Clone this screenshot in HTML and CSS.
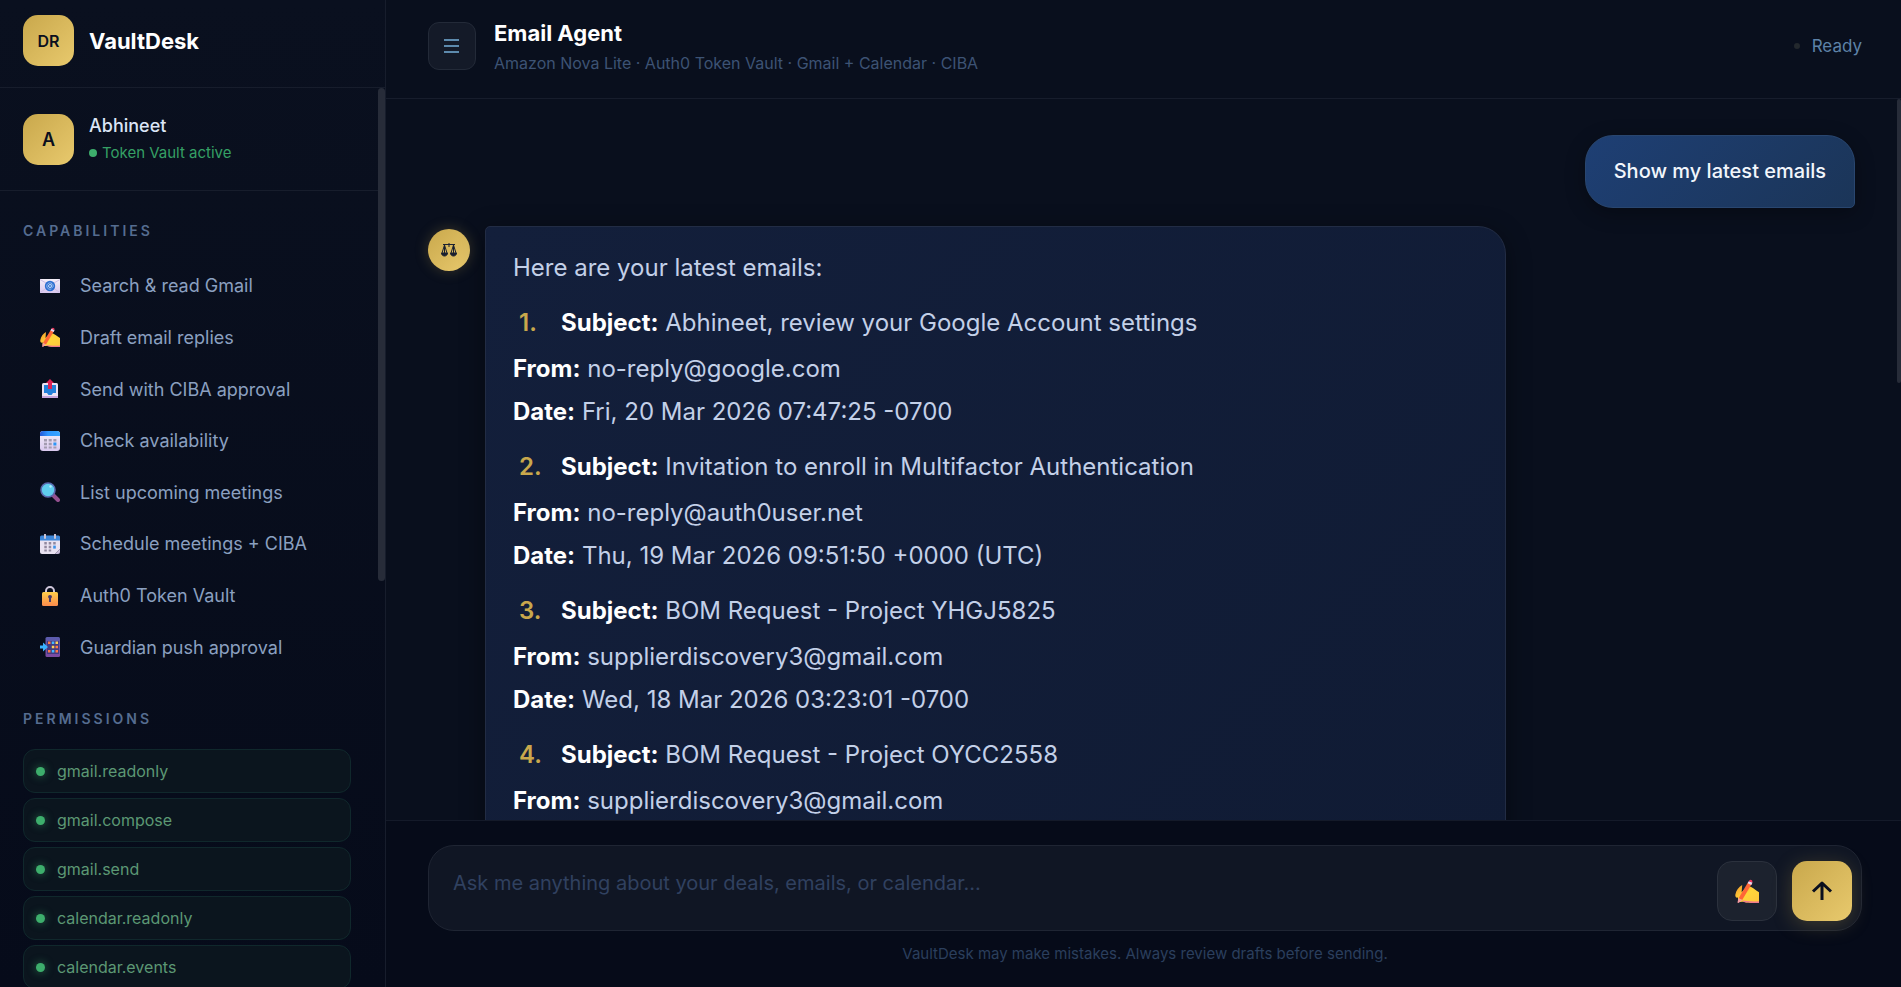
FILE: index.html
```html
<!DOCTYPE html>
<html lang="en">
<head>
    <meta charset="UTF-8">
    <meta name="viewport" content="width=device-width, initial-scale=1.0">
    <title>VaultDesk</title>
    <link rel="stylesheet" href="styles.css">
</head>
<body>
    <svg class="defs" aria-hidden="true">
        <defs>
            <linearGradient id="paper" x1="0" y1="0" x2="0" y2="1">
                <stop offset="0" stop-color="#f4eff8"/>
                <stop offset="1" stop-color="#d9c8ee"/>
            </linearGradient>
            <linearGradient id="blue" x1="0" y1="0" x2="1" y2="0">
                <stop offset="0" stop-color="#2257d8"/>
                <stop offset="0.4" stop-color="#2e96ff"/>
                <stop offset="1" stop-color="#38a4ff"/>
            </linearGradient>
            <linearGradient id="hand" x1="0" y1="0" x2="1" y2="1">
                <stop offset="0" stop-color="#f59a2b"/>
                <stop offset="0.5" stop-color="#ffd53a"/>
                <stop offset="1" stop-color="#ffc73c"/>
            </linearGradient>
            <linearGradient id="lock" x1="0" y1="0" x2="0" y2="1">
                <stop offset="0" stop-color="#ffcf4a"/>
                <stop offset="1" stop-color="#fb8a4c"/>
            </linearGradient>
            <linearGradient id="phone" x1="0" y1="0" x2="0" y2="1">
                <stop offset="0" stop-color="#5a5cae"/>
                <stop offset="1" stop-color="#7c4aa0"/>
            </linearGradient>
            <symbol id="writing" viewBox="0 0 20 20">
                <path d="M6 5 C3 6.500 1 9.500 0.300 13 C0 15 1 16 2.500 15.500 L2.500 18 C4 20 6 18.500 7.500 19 C10 20 14 20 20 20 L20 11 C17 9 14 6.500 11.500 6 C9 7.500 7.500 9 5.500 11 Z" fill="url(#hand)"/>
                <path d="M7 19 C10 20 14 20 20 20 L20 18.500 C15 19 10 18.500 6 18 Z" fill="#f07a8c"/>
                <path d="M11 2.500 L14 4 L6 17.500 L3 16 Z" fill="#ff6636"/>
                <path d="M11.600 1.600 L14.600 3 L13.600 5 L10.500 3.500 Z" fill="#e8d6f0"/>
                <path d="M11.800 1.400 C12.300 0 14.800 0.800 14.500 2.500 L14.200 3 L11.500 1.800 Z" fill="#f2355b"/>
                <path d="M3 16 L6 17.500 L3 20 L2 19.500 Z" fill="#f59aa0"/>
            </symbol>
        </defs>
    </svg>
    <div class="app">
        <aside class="sidebar">
            <div class="brand">
                <div class="badge badge-brand">DR</div>
                <div class="brand-name">VaultDesk</div>
            </div>
            <div class="sidebar-body">
                <div class="user">
                    <div class="badge">A</div>
                    <div>
                        <div class="user-name">Abhineet</div>
                        <div class="user-status"><span class="status-dot"></span>Token Vault active</div>
                    </div>
                </div>
                <h2 class="section-title">CAPABILITIES</h2>
                <ul class="capabilities">
                    <li>
                        <svg class="icon" viewBox="0 0 20 20">
                            <rect x="0" y="3" width="20" height="14" fill="url(#paper)"/>
                            <path d="M0 16.500 L7 12 M20 16.500 L13 12 M0 3.500 L6 7 M20 3.500 L14 7" stroke="#cdbde6" fill="none"/>
                            <circle cx="10" cy="10" r="5.200" fill="#2d6fd0"/>
                            <circle cx="10" cy="10" r="1.500" stroke="#c5dcf8" fill="none"/>
                            <path d="M11.500 8.500 V10.800 C11.700 12 13.200 11.500 13.200 10 A3.200 3.200 0 1 0 11.500 12.900" stroke="#a9c9f2" stroke-width="0.800" fill="none"/>
                        </svg>
                        Search &amp; read Gmail
                    </li>
                    <li>
                        <svg class="icon"><use href="#writing"/></svg>
                        Draft email replies
                    </li>
                    <li>
                        <svg class="icon" viewBox="0 0 20 20">
                            <rect x="2" y="4" width="16" height="15" rx="1.500" fill="#ebe3f4"/>
                            <rect x="2" y="17" width="16" height="2" fill="#c4a5dd"/>
                            <path d="M4 6 H16 V14 H13 L11.500 16 H8.500 L7 14 H4 Z" fill="#2380d8"/>
                            <path d="M10 0 L14 4 H12 V10 H8 V4 H6 Z" fill="#dc2355"/>
                        </svg>
                        Send with CIBA approval
                    </li>
                    <li>
                        <svg class="icon" viewBox="0 0 20 20">
                            <rect x="0" y="0" width="20" height="20" rx="3" fill="url(#paper)"/>
                            <path d="M0 5 V3 A3 3 0 0 1 3 0 H17 A3 3 0 0 1 20 3 V5 Z" fill="url(#blue)"/>
                            <path d="M4 8 h3 v2.500 h-3z M8.700 8 h3 v2.500 h-3z M13.400 8 h3 v2.500 h-3z M4 11.800 h3 v2.500 h-3z M8.700 11.800 h3 v2.500 h-3z M4 15.500 h3 v2 h-3z M8.700 15.500 h3 v2 h-3z M13.400 15.500 h3 v2 h-3z" fill="#a39bb0"/>
                            <rect x="13.400" y="11.500" width="3" height="3" fill="#2e96f5"/>
                        </svg>
                        Check availability
                    </li>
                    <li>
                        <svg class="icon" viewBox="0 0 20 20">
                            <path d="M13 13 L18 18" stroke="#93508f" stroke-width="4" stroke-linecap="round"/>
                            <circle cx="8" cy="8" r="7" fill="#5fcdee" stroke="#5a68ae" stroke-width="1.600"/>
                            <circle cx="10.500" cy="4.500" r="1.200" fill="#b9edfb"/>
                        </svg>
                        List upcoming meetings
                    </li>
                    <li>
                        <svg class="icon" viewBox="0 0 20 20">
                            <path d="M0 5 H20 V15 L15 20 H2 A2 2 0 0 1 0 18 Z" fill="#e9e2f1"/>
                            <path d="M20 15 L15 20 H18 A2 2 0 0 0 20 18 Z" fill="#c9bcdb"/>
                            <path d="M0 6.500 V3 A1.500 1.500 0 0 1 1.500 1.500 H18.500 A1.500 1.500 0 0 1 20 3 V6.500 Z" fill="#3d86d8"/>
                            <path d="M5 0.500 V4 M15 0.500 V4" stroke="#c9c3d3" stroke-width="2" stroke-linecap="round"/>
                            <path d="M4.300 8 h2.500 v2.500 h-2.500z M8.700 8 h2.500 v2.500 h-2.500z M13.200 8 h2.500 v2.500 h-2.500z M4.300 11.800 h2.500 v2.500 h-2.500z M8.700 11.800 h2.500 v2.500 h-2.500z M4.300 15.500 h2.500 v2 h-2.500z M8.700 15.500 h2.500 v2 h-2.500z" fill="#91899f"/>
                            <rect x="13.200" y="11.600" width="2.600" height="3" fill="#3c92e8"/>
                        </svg>
                        Schedule meetings + CIBA
                    </li>
                    <li>
                        <svg class="icon" viewBox="0 0 20 20">
                            <path d="M6 8 V5 A4 4 0 0 1 14 5 V8" stroke="#cfc7dc" stroke-width="2" fill="none"/>
                            <rect x="2" y="6" width="16" height="14" rx="1.500" fill="url(#lock)"/>
                            <path d="M8 11 A2 2 0 1 1 12 11 L11 12.500 V16 H9 V12.500 Z" fill="#4a3a68"/>
                        </svg>
                        Auth0 Token Vault
                    </li>
                    <li>
                        <svg class="icon" viewBox="0 0 20 20">
                            <rect x="5.500" y="0" width="14.500" height="20" rx="1.500" fill="url(#phone)"/>
                            <rect x="7" y="4" width="12" height="13" fill="#433b80"/>
                            <path d="M8 4.500 h2.500 v2.500 h-2.500z M15.500 13 h2.500 v2.500 h-2.500z M15.500 8.800 h2.500 v2.500 h-2.500z M8 13 h2.500 v2.500 h-2.500z" fill="#ff7a45"/>
                            <path d="M11.800 4.500 h2.500 v2.500 h-2.500z M11.800 13 h2.500 v2.500 h-2.500z" fill="#45b8ff"/>
                            <path d="M15.500 4.500 h2.500 v2.500 h-2.500z M11.800 8.800 h2.500 v2.500 h-2.500z" fill="#ffd25a"/>
                            <path d="M0 8.500 H3 V5.500 L8 10 L3 14.500 V11.500 H0 Z" fill="#38b2ff"/>
                        </svg>
                        Guardian push approval
                    </li>
                </ul>
                <h2 class="section-title">PERMISSIONS</h2>
                <ul class="permissions">
                    <li>gmail.readonly</li>
                    <li>gmail.compose</li>
                    <li>gmail.send</li>
                    <li>calendar.readonly</li>
                    <li>calendar.events</li>
                </ul>
            </div>
            <div class="scroll-thumb"></div>
        </aside>

        <main class="main">
            <header class="topbar">
                <button class="menu-btn" type="button" aria-label="Toggle sidebar">
                    <svg width="16" height="16" viewBox="0 0 16 16"><path d="M0 2 H15 M0 8 H15 M0 14 H15" stroke="#5d8aad" stroke-width="2"/></svg>
                </button>
                <div class="topbar-text">
                    <h1>Email Agent</h1>
                    <p>Amazon Nova Lite · Auth0 Token Vault · Gmail + Calendar · CIBA</p>
                </div>
                <div class="state"><span class="state-dot"></span>Ready</div>
            </header>

            <section class="chat">
                <div class="messages">
                    <div class="message message-user">
                        <div class="bubble">Show my latest emails</div>
                    </div>
                    <div class="message message-bot">
                        <div class="bot-avatar">
                            <svg width="16" height="16" viewBox="0 0 16 16" fill="none" stroke="#1a2030">
                                <path d="M8 1 V5 M2 2.500 H14 M3.500 3 L1 11 M3.500 3 L6 11 M12.500 3 L10 11 M12.500 3 L15 11 M3.500 3 V11 M12.500 3 V11"/>
                                <path d="M0.500 11 H6.500 C6.500 15 0.500 15 0.500 11 Z M9.500 11 H15.500 C15.500 15 9.500 15 9.500 11 Z" fill="#1a2030"/>
                            </svg>
                        </div>
                        <div class="bubble">
                            <p>Here are your latest emails:</p>
                            <div class="entry"><span class="number">1.</span><span><strong>Subject:</strong> Abhineet, review your Google Account settings</span></div>
                            <p><strong>From:</strong> no-reply@google.com<br><strong>Date:</strong> Fri, 20 Mar 2026 07:47:25 -0700</p>
                            <div class="entry"><span class="number">2.</span><span><strong>Subject:</strong> Invitation to enroll in Multifactor Authentication</span></div>
                            <p><strong>From:</strong> no-reply@auth0user.net<br><strong>Date:</strong> Thu, 19 Mar 2026 09:51:50 +0000 (UTC)</p>
                            <div class="entry"><span class="number">3.</span><span><strong>Subject:</strong> BOM Request - Project YHGJ5825</span></div>
                            <p><strong>From:</strong> supplierdiscovery3@gmail.com<br><strong>Date:</strong> Wed, 18 Mar 2026 03:23:01 -0700</p>
                            <div class="entry"><span class="number">4.</span><span><strong>Subject:</strong> BOM Request - Project OYCC2558</span></div>
                            <p><strong>From:</strong> supplierdiscovery3@gmail.com</p>
                        </div>
                    </div>
                </div>
                <div class="scroll-thumb"></div>
            </section>

            <footer class="composer">
                <form class="input-box">
                    <textarea rows="1" aria-label="Message" placeholder="Ask me anything about your deals, emails, or calendar..."></textarea>
                    <button class="draft-btn" type="button" aria-label="Draft">
                        <svg width="24" height="24"><use href="#writing"/></svg>
                    </button>
                    <button class="send-btn" type="button" aria-label="Send">
                        <svg width="22" height="20" viewBox="0 0 22 20" fill="none" stroke="#0a0f1e" stroke-width="3"><path d="M11 19 V2 M2 10.500 L11 2 L20 10.500" stroke-linejoin="round"/></svg>
                    </button>
                </form>
                <p class="disclaimer">VaultDesk may make mistakes. Always review drafts before sending.</p>
            </footer>
        </main>
    </div>
</body>
</html>
```
FILE: styles.css
```css
*{
    box-sizing: border-box;
    padding: 0;
    margin: 0;
}
body{
    font-family: Inter, "Open Sans", sans-serif;
    background: #090f1d;
    color: #c3d0e8;
    overflow: hidden;
}
ul{
    list-style: none;
}
button{
    display: flex;
    align-items: center;
    justify-content: center;
    flex-shrink: 0;
    cursor: pointer;
}
.defs{
    position: absolute;
    width: 0;
    height: 0;
}
.app{
    display: flex;
    height: 100vh;
}

/* Sidebar */
.sidebar{
    position: relative;
    display: flex;
    flex-direction: column;
    flex-shrink: 0;
    width: 386px;
    border-right: 1px solid #171d2c;
    background: linear-gradient(180deg, #0a101f, #060b1a);
}
.brand{
    display: flex;
    align-items: center;
    gap: 15px;
    padding: 15px 23px 21px;
    border-bottom: 1px solid #171d2c;
}
.badge{
    display: flex;
    align-items: center;
    justify-content: center;
    width: 51px;
    height: 51px;
    border-radius: 15px;
    background: linear-gradient(135deg, #c9a84c, #e8c96d);
    color: #0a0f1e;
    font-size: 18px;
    font-weight: 600;
}
.badge-brand{
    font-size: 16px;
}
.brand-name{
    font-size: 22px;
    font-weight: 700;
    color: #fff;
}
.sidebar-body{
    flex: 1;
    min-height: 0;
    overflow: hidden;
}
.user{
    display: flex;
    align-items: center;
    gap: 15px;
    margin-right: 7px;
    padding: 24px 23px;
    border-bottom: 1px solid #171d2c;
}
.user-name{
    font-size: 18px;
    font-weight: 500;
    line-height: 28px;
    color: #dbe5f6;
}
.user-status{
    display: flex;
    align-items: center;
    gap: 5px;
    font-size: 15px;
    line-height: 26px;
    color: #35a065;
}
.status-dot{
    width: 8px;
    height: 8px;
    border-radius: 50%;
    background: #3dae6c;
}
.section-title{
    padding: 31px 23px 0;
    font-size: 14px;
    font-weight: 600;
    line-height: 18px;
    letter-spacing: 3px;
    color: #556c90;
}
.capabilities{
    display: grid;
    grid-auto-rows: 1fr;
    min-height: 413px;
    margin: 20px 0 6px;
}
.capabilities li{
    display: flex;
    align-items: center;
    gap: 20px;
    padding-left: 40px;
    font-size: 18px;
    color: #8ba0c0;
}
.icon{
    width: 20px;
    height: 20px;
}
.permissions{
    display: flex;
    flex-direction: column;
    gap: 5px;
    padding: 21px 34px 0 23px;
}
.permissions li{
    display: flex;
    align-items: center;
    gap: 12px;
    height: 44px;
    padding: 0 12px;
    border: 1px solid #10282c;
    border-radius: 12px;
    background: #0b151e;
    font-size: 16px;
    color: #5c9874;
}
.permissions li::before{
    content: "";
    width: 9px;
    height: 9px;
    border-radius: 50%;
    background: #3dae6c;
    box-shadow: 0 0 8px #3dae6c99;
}
.scroll-thumb{
    position: absolute;
    right: 0;
    width: 7px;
    border-radius: 4px;
    background: #272c39;
}
.sidebar .scroll-thumb{
    top: 88px;
    height: 493px;
}

/* Main column */
.main{
    display: flex;
    flex-direction: column;
    flex: 1;
    min-width: 0;
}
.topbar{
    display: flex;
    align-items: center;
    gap: 18px;
    height: 99px;
    padding: 0 39px 7px 42px;
    border-bottom: 1px solid #171d2c;
    background: #090f1d;
}
.menu-btn{
    width: 48px;
    height: 48px;
    border: 1px solid #232a38;
    border-radius: 11px;
    background: #141a28;
}
.topbar-text{
    flex: 1;
    padding-top: 2px;
}
.topbar h1{
    font-size: 22px;
    font-weight: 700;
    line-height: 32px;
    color: #fff;
}
.topbar p{
    font-size: 16px;
    line-height: 28px;
    color: #3d5374;
}
.state{
    display: flex;
    align-items: center;
    gap: 12px;
    font-size: 17px;
    color: #5d82a8;
}
.state-dot{
    width: 6px;
    height: 6px;
    border-radius: 50%;
    background: #23282d;
}
.chat{
    position: relative;
    flex: 1;
    min-height: 0;
    overflow: hidden;
}
.chat .scroll-thumb{
    top: 0;
    width: 4px;
    height: 284px;
}
.messages{
    display: flex;
    flex-direction: column;
    gap: 18px;
    padding: 36px 46px 0 42px;
}
.message{
    display: flex;
    align-items: flex-start;
}
.message-user{
    justify-content: flex-end;
}
.message-user .bubble{
    padding: 18px 28px;
    border: 1px solid #29466f;
    border-radius: 28px 28px 5px 28px;
    background: linear-gradient(135deg, #1e3f74, #1b3558);
    box-shadow: 0 5px 20px #0000004d;
    font-size: 20px;
    font-weight: 500;
    line-height: 35px;
    color: #f2f6fc;
}
.message-bot{
    gap: 15px;
}
.bot-avatar{
    display: flex;
    align-items: center;
    justify-content: center;
    width: 42px;
    height: 42px;
    margin-top: 3px;
    border-radius: 50%;
    background: linear-gradient(135deg, #c9a84c, #e8c96d);
    box-shadow: 0 0 14px #c9a84c40;
}
.message-bot .bubble{
    flex: 0 1 1021px;
    padding: 19px 27px 48px;
    border: 1px solid #222c44;
    border-radius: 5px 28px 28px 28px;
    background: linear-gradient(135deg, #131f3b, #101b34);
    box-shadow: 0 5px 24px #00000066;
    font-size: 24px;
    line-height: 43px;
}
.message-bot strong{
    font-weight: 700;
    color: #fff;
}
.entry{
    display: flex;
    margin: 12px 0 3px;
}
.number{
    width: 48px;
    padding-left: 6px;
    font-weight: 600;
    color: #c9a84c;
}

/* Composer */
.composer{
    padding: 24px 39px 22px 42px;
    border-top: 1px solid #141a29;
    background: #060b19;
    z-index: 1;
}
.input-box{
    display: flex;
    gap: 15px;
    padding: 15px 9px 9px 24px;
    border: 1px solid #1f2533;
    border-radius: 26px;
    background: #101624;
}
.input-box textarea{
    flex: 1;
    height: 60px;
    padding-top: 3px;
    border: none;
    outline: none;
    resize: none;
    background: none;
    color: #dbe5f6;
    font-family: inherit;
    font-size: 20px;
    line-height: 38px;
}
.input-box textarea::placeholder{
    color: #304160;
}
.draft-btn, .send-btn{
    width: 60px;
    height: 60px;
    border-radius: 15px;
}
.draft-btn{
    border: 1px solid #2b313d;
    background: #1c222e;
}
.send-btn{
    border: none;
    background: linear-gradient(135deg, #c9a84c, #e8c96d);
    box-shadow: 0 4px 20px #c9a84c40;
}
.disclaimer{
    padding-top: 12px;
    font-size: 15px;
    line-height: 22px;
    text-align: center;
    color: #2b3f5d;
}
```
